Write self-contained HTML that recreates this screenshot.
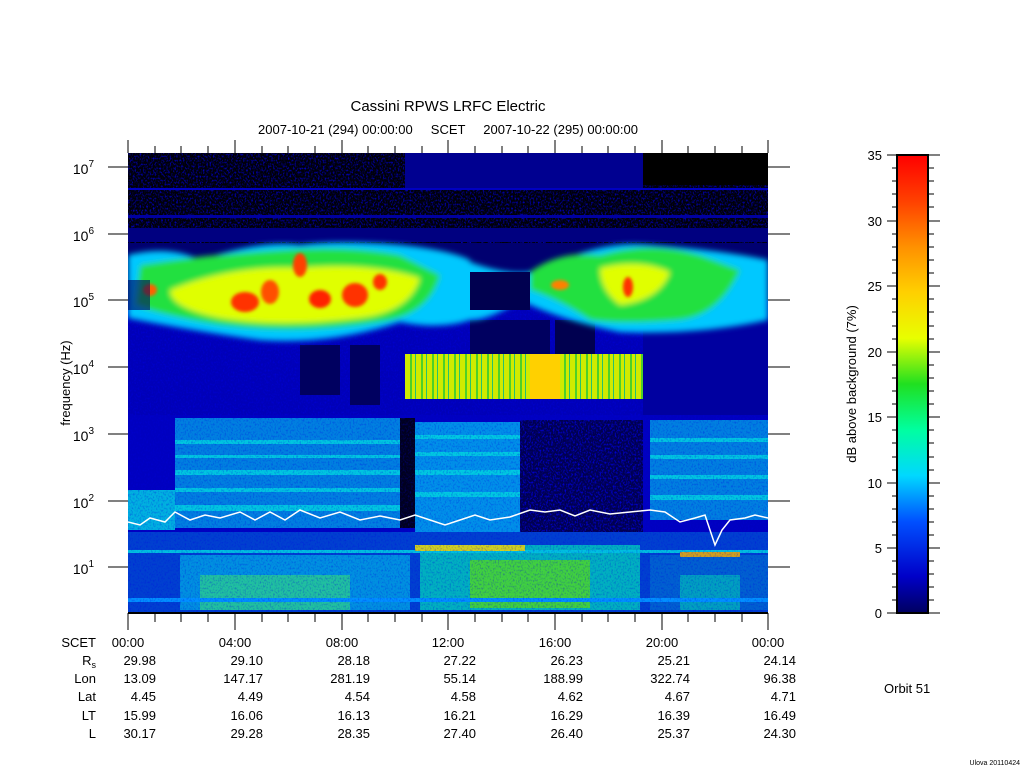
<!DOCTYPE html>
<html><head><meta charset="utf-8"><style>
html,body{margin:0;padding:0;background:#fff;}
svg{display:block;font-family:"Liberation Sans",sans-serif;}
</style></head><body>
<svg width="1024" height="768" viewBox="0 0 1024 768" xmlns="http://www.w3.org/2000/svg">
<defs>
<linearGradient id="cb" x1="0" y1="1" x2="0" y2="0">
<stop offset="0" stop-color="#000060"/>
<stop offset="0.08" stop-color="#0000c8"/>
<stop offset="0.2" stop-color="#0050ff"/>
<stop offset="0.3" stop-color="#00d8ff"/>
<stop offset="0.4" stop-color="#00ffa0"/>
<stop offset="0.5" stop-color="#20e020"/>
<stop offset="0.6" stop-color="#e8ff00"/>
<stop offset="0.7" stop-color="#ffd000"/>
<stop offset="0.8" stop-color="#ff9000"/>
<stop offset="0.9" stop-color="#ff4000"/>
<stop offset="1" stop-color="#ff0000"/>
</linearGradient>
<filter id="bl" x="-20%" y="-50%" width="140%" height="200%"><feGaussianBlur stdDeviation="3"/></filter>
<filter id="bl2" x="-20%" y="-50%" width="140%" height="200%"><feGaussianBlur stdDeviation="1.5"/></filter>
<filter id="noise" x="0" y="0" width="100%" height="100%">
<feTurbulence type="fractalNoise" baseFrequency="0.6 0.5" numOctaves="2" seed="3"/>
<feColorMatrix values="0 0 0 0 0  0 0 0 0 0  0 0 0 0 0.75  0 0 0 -3 1.6"/>
</filter>
<pattern id="stripes" width="11" height="10" patternUnits="userSpaceOnUse">
<rect width="11" height="10" fill="#c8f000"/>
<rect x="3" width="2" height="10" fill="#30d030"/>
<rect x="8" width="1" height="10" fill="#00c080"/>
</pattern>
<clipPath id="pc"><rect x="128" y="153" width="640" height="460"/></clipPath>
</defs>

<text x="448" y="111" font-size="15" text-anchor="middle">Cassini RPWS LRFC Electric</text>
<text x="448" y="134" font-size="13" text-anchor="middle" xml:space="preserve">2007-10-21 (294) 00:00:00     SCET     2007-10-22 (295) 00:00:00</text>

<g clip-path="url(#pc)">
<rect x="128" y="153" width="640" height="460" fill="#000070"/>
<rect x="128" y="153" width="640" height="90" fill="#000008"/>
<rect x="128" y="153" width="640" height="90" filter="url(#noise)" opacity="0.8"/>
<rect x="405" y="153" width="238" height="35" fill="#000090"/>
<rect x="643" y="153" width="125" height="32" fill="#000000"/>
<rect x="128" y="188" width="640" height="2" fill="#0000c0"/>
<rect x="128" y="215" width="640" height="3" fill="#0000a0"/>
<rect x="128" y="228" width="640" height="14" fill="#000080"/>
<rect x="128" y="300" width="640" height="118" fill="#0000b8"/>
<rect x="128" y="300" width="640" height="118" filter="url(#noise)" opacity="0.5"/>
<rect x="300" y="345" width="40" height="50" fill="#000060"/>
<rect x="350" y="345" width="30" height="60" fill="#000060"/>
<rect x="470" y="320" width="80" height="40" fill="#000060"/>
<rect x="555" y="320" width="40" height="35" fill="#000050"/>
<rect x="643" y="300" width="125" height="115" fill="#0000a0"/>
<g filter="url(#bl)">
<path d="M128 255 Q170 245 200 260 Q260 240 300 245 Q340 240 400 245 Q450 250 470 260 L470 320 Q440 330 400 322 Q330 345 260 340 Q200 332 128 318Z" fill="#00c8ff"/>
<path d="M470 262 Q520 280 545 268 Q600 240 650 245 Q720 250 768 260 L768 320 Q700 335 620 332 Q560 320 520 300 Q490 320 470 320Z" fill="#00c8ff"/>
<path d="M140 265 Q200 255 280 250 Q350 245 400 255 L440 275 Q430 315 380 322 Q300 335 220 325 Q160 315 135 305Z" fill="#20e040"/>
<path d="M530 272 Q560 250 600 255 Q650 240 700 255 L740 270 Q720 315 680 320 Q620 325 590 320 Q560 300 530 290Z" fill="#20e040"/>
<path d="M170 290 Q230 265 300 268 Q370 262 420 278 Q410 312 360 318 Q280 328 220 318 Q170 308 170 290Z" fill="#e0ff00"/>
<path d="M600 268 Q640 258 670 272 Q660 300 620 305 Q600 290 600 268Z" fill="#e0ff00"/>
</g>
<g filter="url(#bl2)">
<ellipse cx="245" cy="302" rx="14" ry="10" fill="#ff3000"/>
<ellipse cx="270" cy="292" rx="9" ry="12" fill="#ff5000"/>
<ellipse cx="300" cy="265" rx="7" ry="12" fill="#ff4000"/>
<ellipse cx="320" cy="299" rx="11" ry="9" fill="#ff2000"/>
<ellipse cx="355" cy="295" rx="13" ry="12" fill="#ff3000"/>
<ellipse cx="380" cy="282" rx="7" ry="8" fill="#ff3000"/>
<ellipse cx="150" cy="290" rx="7" ry="6" fill="#ff6000"/>
<ellipse cx="628" cy="287" rx="5" ry="10" fill="#ff3000"/>
<ellipse cx="560" cy="285" rx="9" ry="5" fill="#ff8000"/>
</g>
<rect x="128" y="280" width="22" height="30" fill="#000060" opacity="0.6"/>
<rect x="470" y="272" width="60" height="38" fill="#000050"/>
<rect x="405" y="354" width="238" height="45" fill="url(#stripes)"/>
<rect x="530" y="354" width="30" height="45" fill="#ffd000"/>
<rect x="405" y="354" width="238" height="45" fill="#ffd000" opacity="0.15"/>
<rect x="128" y="415" width="640" height="198" fill="#0000c0"/>
<rect x="175" y="418" width="225" height="110" fill="#0080e0"/>
<rect x="415" y="422" width="105" height="110" fill="#0090e8"/>
<rect x="650" y="420" width="118" height="100" fill="#0080e0"/>
<g fill="#00d8e0" opacity="0.8">
<rect x="175" y="440" width="225" height="4"/><rect x="175" y="455" width="225" height="3"/><rect x="175" y="470" width="225" height="5"/><rect x="175" y="488" width="225" height="4"/><rect x="175" y="505" width="225" height="6"/>
<rect x="415" y="435" width="105" height="4"/><rect x="415" y="452" width="105" height="4"/><rect x="415" y="470" width="105" height="5"/><rect x="415" y="492" width="105" height="5"/>
<rect x="650" y="438" width="118" height="4"/><rect x="650" y="455" width="118" height="4"/><rect x="650" y="475" width="118" height="4"/><rect x="650" y="495" width="118" height="5"/>
</g>
<rect x="400" y="418" width="15" height="110" fill="#000020"/>
<rect x="520" y="420" width="123" height="130" fill="#000050"/>
<rect x="520" y="420" width="123" height="130" filter="url(#noise)" opacity="0.8"/>
<rect x="128" y="490" width="47" height="40" fill="#00b0e0"/>
<rect x="128" y="532" width="640" height="81" fill="#0040d0"/>
<rect x="180" y="555" width="230" height="55" fill="#0090e0"/>
<rect x="200" y="575" width="150" height="35" fill="#20c0a0"/>
<rect x="420" y="545" width="220" height="65" fill="#00b0c0"/>
<rect x="470" y="560" width="120" height="48" fill="#40d040"/>
<rect x="650" y="555" width="118" height="55" fill="#0060d0"/>
<rect x="680" y="575" width="60" height="35" fill="#00a0c0"/>
<rect x="128" y="550" width="640" height="3" fill="#00c0e0"/>
<rect x="415" y="545" width="110" height="6" fill="#d0d020"/>
<rect x="680" y="552" width="60" height="5" fill="#d0a020"/>
<rect x="128" y="598" width="640" height="4" fill="#0090ff"/>
<rect x="128" y="415" width="640" height="198" filter="url(#noise)" opacity="0.3"/>
<polyline fill="none" stroke="#fff" stroke-width="1.5" points="128,522 140,525 150,518 165,522 175,512 190,520 205,515 220,518 240,512 255,520 270,512 285,520 300,510 320,518 340,512 360,520 380,516 400,520 415,515 430,520 445,525 460,520 475,515 490,520 510,517 530,510 545,512 560,510 575,516 590,510 610,514 630,512 650,510 665,512 680,522 695,518 705,515 715,545 722,530 730,520 745,518 755,515 768,518"/>
</g>
<line x1="128" y1="613" x2="768" y2="613" stroke="#000" stroke-width="2"/>

<g stroke="#000" stroke-width="1">
<path d="M128 140V153M235 140V153M342 140V153M448 140V153M555 140V153M662 140V153M768 140V153"/>
<path d="M155 146V153M181 146V153M208 146V153M262 146V153M288 146V153M315 146V153M368 146V153M395 146V153M422 146V153M475 146V153M502 146V153M528 146V153M582 146V153M608 146V153M635 146V153M688 146V153M715 146V153M742 146V153"/>
<path d="M128 613V630M235 613V630M342 613V630M448 613V630M555 613V630M662 613V630M768 613V630"/>
<path d="M155 613V622M181 613V622M208 613V622M262 613V622M288 613V622M315 613V622M368 613V622M395 613V622M422 613V622M475 613V622M502 613V622M528 613V622M582 613V622M608 613V622M635 613V622M688 613V622M715 613V622M742 613V622"/>
<path d="M108 167H128M108 234H128M108 300H128M108 367H128M108 434H128M108 501H128M108 567H128"/>
<path d="M768 167H790M768 234H790M768 300H790M768 367H790M768 434H790M768 501H790M768 567H790"/>
</g>
<g font-size="14" text-anchor="end">
<text x="94" y="174">10<tspan dy="-7" font-size="10">7</tspan></text>
<text x="94" y="241">10<tspan dy="-7" font-size="10">6</tspan></text>
<text x="94" y="307">10<tspan dy="-7" font-size="10">5</tspan></text>
<text x="94" y="374">10<tspan dy="-7" font-size="10">4</tspan></text>
<text x="94" y="441">10<tspan dy="-7" font-size="10">3</tspan></text>
<text x="94" y="508">10<tspan dy="-7" font-size="10">2</tspan></text>
<text x="94" y="574">10<tspan dy="-7" font-size="10">1</tspan></text>
</g>
<text transform="translate(70,383) rotate(-90)" font-size="13" text-anchor="middle">frequency (Hz)</text>

<g font-size="13">
<g text-anchor="end">
<text x="96" y="647">SCET</text>
<text x="96" y="665">R<tspan font-size="9" dy="3">s</tspan></text>
<text x="96" y="683">Lon</text>
<text x="96" y="701">Lat</text>
<text x="96" y="720">LT</text>
<text x="96" y="738">L</text>
</g>
<g text-anchor="middle">
<text x="128" y="647">00:00</text><text x="235" y="647">04:00</text><text x="342" y="647">08:00</text><text x="448" y="647">12:00</text><text x="555" y="647">16:00</text><text x="662" y="647">20:00</text><text x="768" y="647">00:00</text>
</g>
<g text-anchor="end">
<text x="156" y="665">29.98</text><text x="263" y="665">29.10</text><text x="370" y="665">28.18</text><text x="476" y="665">27.22</text><text x="583" y="665">26.23</text><text x="690" y="665">25.21</text><text x="796" y="665">24.14</text>
<text x="156" y="683">13.09</text><text x="263" y="683">147.17</text><text x="370" y="683">281.19</text><text x="476" y="683">55.14</text><text x="583" y="683">188.99</text><text x="690" y="683">322.74</text><text x="796" y="683">96.38</text>
<text x="156" y="701">4.45</text><text x="263" y="701">4.49</text><text x="370" y="701">4.54</text><text x="476" y="701">4.58</text><text x="583" y="701">4.62</text><text x="690" y="701">4.67</text><text x="796" y="701">4.71</text>
<text x="156" y="720">15.99</text><text x="263" y="720">16.06</text><text x="370" y="720">16.13</text><text x="476" y="720">16.21</text><text x="583" y="720">16.29</text><text x="690" y="720">16.39</text><text x="796" y="720">16.49</text>
<text x="156" y="738">30.17</text><text x="263" y="738">29.28</text><text x="370" y="738">28.35</text><text x="476" y="738">27.40</text><text x="583" y="738">26.40</text><text x="690" y="738">25.37</text><text x="796" y="738">24.30</text>
</g>
<text x="884" y="693">Orbit 51</text>
</g>
<text x="1020" y="765" font-size="7" text-anchor="end">Ulova 20110424</text>

<rect x="897" y="155" width="31" height="458" fill="url(#cb)" stroke="#000" stroke-width="2"/>
<g stroke="#000" stroke-width="1">
<path d="M887 155H897M887 221H897M887 286H897M887 352H897M887 417H897M887 483H897M887 548H897M887 613H897"/>
<path d="M928 155H940M928 221H940M928 286H940M928 352H940M928 417H940M928 483H940M928 548H940M928 613H940"/>
<path d="M892 168H897M892 181H897M892 194H897M892 207H897M892 234H897M892 247H897M892 260H897M892 273H897M892 299H897M892 312H897M892 326H897M892 339H897M892 365H897M892 378H897M892 391H897M892 404H897M892 430H897M892 443H897M892 457H897M892 470H897M892 496H897M892 509H897M892 522H897M892 535H897M892 561H897M892 574H897M892 587H897M892 600H897"/>
<path d="M928 168H934M928 181H934M928 194H934M928 207H934M928 234H934M928 247H934M928 260H934M928 273H934M928 299H934M928 312H934M928 326H934M928 339H934M928 365H934M928 378H934M928 391H934M928 404H934M928 430H934M928 443H934M928 457H934M928 470H934M928 496H934M928 509H934M928 522H934M928 535H934M928 561H934M928 574H934M928 587H934M928 600H934"/>
</g>
<g font-size="13" text-anchor="end">
<text x="882" y="160">35</text><text x="882" y="226">30</text><text x="882" y="291">25</text><text x="882" y="357">20</text><text x="882" y="422">15</text><text x="882" y="488">10</text><text x="882" y="553">5</text><text x="882" y="618">0</text>
</g>
<text transform="translate(856,384) rotate(-90)" font-size="13" text-anchor="middle">dB above background (7%)</text>
</svg>
</body></html>
